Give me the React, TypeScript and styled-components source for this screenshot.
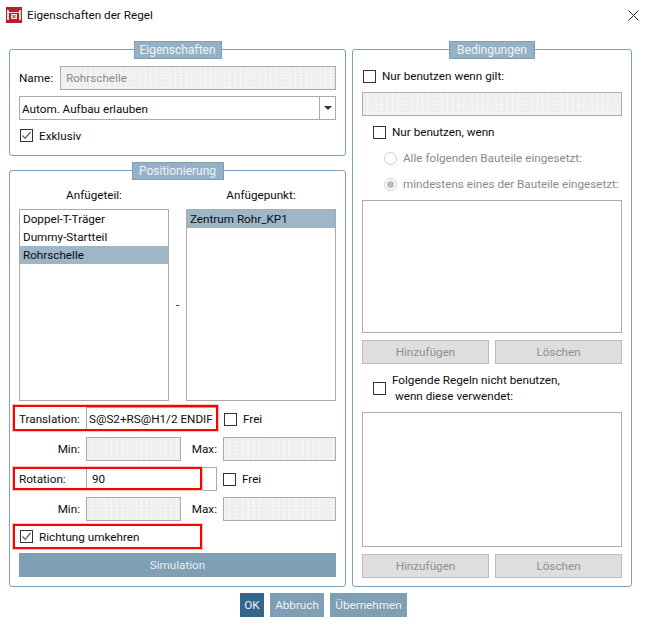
import React from "react";
import styled, { createGlobalStyle } from "styled-components";

const Global = createGlobalStyle`
  html, body { margin: 0; padding: 0; background: #fff; }
  #root { width: 647px; height: 626px; overflow: hidden; }
  * { box-sizing: border-box; }
`;

const Dialog = styled.div`
  width: 647px;
  height: 626px;
  background: #fff;
  font-family: Roboto, "Noto Sans", sans-serif;
  font-size: 11.7px;
  color: #0c0c0c;
  display: flex;
  flex-direction: column;
`;

const TitleBar = styled.div`
  height: 30px;
  display: flex;
  align-items: center;
  padding: 0 8px 0 6px;
  gap: 5px;
  flex: none;
`;

const Title = styled.span`
  flex: 1;
`;

const Columns = styled.div`
  display: flex;
  gap: 6px;
  padding: 19px 0 0 9px;
  height: 557px;
  flex: none;
`;

const LeftColumn = styled.div`
  width: 337px;
  display: flex;
  flex-direction: column;
  gap: 14px;
`;

const Panel = styled.section<{ $h: number; $w?: number }>`
  height: ${(p) => p.$h}px;
  width: ${(p) => (p.$w ? `${p.$w}px` : "auto")};
  border: 1px solid #7f9fb4;
  border-radius: 3px;
  padding: 0 9px;
  display: flex;
  flex-direction: column;
`;

const Legend = styled.div<{ $w: number }>`
  width: ${(p) => p.$w}px;
  height: 18px;
  margin: -9px auto 0;
  background: #94b1c7;
  border: 1px solid #7f9fb4;
  color: #f0f4f7;
  font-size: 12px;
  display: flex;
  align-items: center;
  justify-content: center;
  flex: none;
`;

const Row = styled.div<{ $top?: number }>`
  position: relative;
  display: flex;
  align-items: center;
  height: 24px;
  margin-top: ${(p) => p.$top ?? 0}px;
  flex: none;
`;

const FieldLabel = styled.span<{ $w: number; $right?: boolean }>`
  width: ${(p) => p.$w}px;
  flex: none;
  text-align: ${(p) => (p.$right ? "right" : "left")};
  padding-right: ${(p) => (p.$right ? 6 : 0)}px;
`;

const Disabled = styled.div<{ $w?: number }>`
  width: ${(p) => (p.$w ? `${p.$w}px` : "100%")};
  height: 24px;
  flex: ${(p) => (p.$w ? "none" : "1")};
  border: 1px solid #ababab;
  color: #8a8a8a;
  padding-left: 5px;
  display: flex;
  align-items: center;
  background-color: #eff3ef;
  background-image:
    radial-gradient(circle, #f3d9de 0.6px, transparent 0.8px),
    radial-gradient(circle, #fff 0.6px, transparent 0.8px);
  background-size: 6px 4px, 5px 3px;
  background-position: 0 0, 2px 1px;
`;

const Input = styled.div<{ $w: number; $pad: number }>`
  width: ${(p) => p.$w}px;
  height: 24px;
  flex: none;
  border: 1px solid #ababab;
  padding-left: ${(p) => p.$pad}px;
  display: flex;
  align-items: center;
  overflow: hidden;
  white-space: nowrap;
  background: #fff;
`;

const Select = styled.div`
  height: 24px;
  width: 100%;
  border: 1px solid #ababab;
  display: flex;
  align-items: center;
  padding: 1px 0 0 2px;
  justify-content: space-between;
`;

const SelectArrow = styled.span`
  width: 16px;
  height: 22px;
  margin-top: -1px;
  border-left: 1px solid #ababab;
  display: flex;
  align-items: center;
  justify-content: center;
  &::after {
    content: "";
    border-left: 4px solid transparent;
    border-right: 4px solid transparent;
    border-top: 4px solid #333;
  }
`;

const CheckRow = styled.div<{ $top?: number; $indent?: number; $h?: number; $low?: boolean }>`
  position: relative;
  display: flex;
  align-items: center;
  gap: 6px;
  height: ${(p) => p.$h ?? 16}px;
  margin-top: ${(p) => p.$top ?? 0}px;
  padding-left: ${(p) => p.$indent ?? 1}px;
  padding-top: ${(p) => (p.$low ? 1 : 0)}px;
  flex: none;
  white-space: nowrap;
`;

const Box = styled.span<{ $low?: boolean }>`
  width: 13px;
  height: 13px;
  margin-top: ${(p) => (p.$low ? -1 : 0)}px;
  border: 1px solid #333;
  background: #fff;
  flex: none;
  display: inline-flex;
`;

const Radio = styled.span<{ $on?: boolean }>`
  width: 13px;
  height: 13px;
  border-radius: 50%;
  border: 1px solid #cfcfcf;
  flex: none;
  display: inline-flex;
  align-items: center;
  justify-content: center;
  &::after {
    content: "";
    width: 7px;
    height: 7px;
    border-radius: 50%;
    background: ${(p) => (p.$on ? "#bdbdbd" : "transparent")};
  }
`;

const Muted = styled.span`
  color: #8a8a8a;
`;

const ListHeads = styled.div`
  display: grid;
  grid-template-columns: 150px 150px;
  column-gap: 17px;
  text-align: center;
  margin-top: 7px;
  height: 16px;
  line-height: 16px;
  flex: none;
`;

const Lists = styled.div`
  display: flex;
  align-items: center;
  justify-content: space-between;
  height: 192px;
  margin-top: 6px;
  flex: none;
`;

const ListBox = styled.div<{ $h?: number; $w?: number; $top?: number }>`
  width: ${(p) => (p.$w ? `${p.$w}px` : "100%")};
  height: ${(p) => (p.$h ? `${p.$h}px` : "100%")};
  margin-top: ${(p) => p.$top ?? 0}px;
  border: 1px solid #ababab;
  background: #fff;
  flex: none;
`;

const ListItem = styled.div<{ $sel?: boolean }>`
  height: 18px;
  line-height: 19px;
  padding-left: 3px;
  background: ${(p) => (p.$sel ? "#9db6c8" : "transparent")};
`;

const Callout = styled.div<{ $l: number; $t: number; $w: number; $h: number }>`
  position: absolute;
  left: ${(p) => p.$l}px;
  top: ${(p) => p.$t}px;
  width: ${(p) => p.$w}px;
  height: ${(p) => p.$h}px;
  border: 2px solid #f00;
  box-shadow: 0 0 0 1px #ffc4c4;
  pointer-events: none;
`;

const Frei = styled.span`
  margin-left: 6px;
  display: inline-flex;
  align-items: center;
  gap: 6px;
`;

const Wide = styled.div`
  height: 24px;
  margin-top: 5px;
  background: #7e9fb4;
  color: #e8eef2;
  display: flex;
  align-items: center;
  justify-content: center;
  flex: none;
`;

const ButtonPair = styled.div<{ $top: number }>`
  display: grid;
  grid-template-columns: 127px 127px;
  column-gap: 6px;
  margin-top: ${(p) => p.$top}px;
  flex: none;
`;

const GrayButton = styled.div`
  height: 24px;
  background: #dedede;
  border: 1px solid #bcbcbc;
  color: #8f8f8f;
  display: flex;
  align-items: center;
  justify-content: center;
`;

const Footer = styled.div`
  display: flex;
  justify-content: center;
  gap: 6px;
  padding: 6px 0 0 0;
`;

const FootButton = styled.div<{ $w: number; $primary?: boolean }>`
  width: ${(p) => p.$w}px;
  height: 24px;
  background: ${(p) => (p.$primary ? "#34668a" : "#7e9fb4")};
  color: #edf2f5;
  display: flex;
  align-items: center;
  justify-content: center;
`;

const TwoLine = styled.span`
  line-height: 16px;
  white-space: pre;
`;

const Check = () => (
  <svg width="11" height="11" viewBox="0 0 11 11">
    <path d="M1.5 5.5 L4.2 8.3 L9.5 2" fill="none" stroke="#5a5a5a" strokeWidth="1.2" />
  </svg>
);

const AppIcon = () => (
  <svg width="16" height="16" viewBox="0 0 16 16">
    <rect width="16" height="16" fill="#c01c28" />
    <rect x="1" y="3" width="2" height="10" fill="#f6dcdc" />
    <rect x="13" y="3" width="2" height="10" fill="#f6dcdc" />
    <rect x="3" y="5" width="10" height="1" fill="#f6dcdc" />
    <rect x="5" y="7" width="6" height="5" fill="#f7e6e6" />
    <path d="M6.5 8 L9.5 11 M9.5 8 L6.5 11" stroke="#b01a26" strokeWidth="1" />
  </svg>
);

const CloseIcon = () => (
  <svg width="11" height="11" viewBox="0 0 11 11">
    <path d="M0.5 0.5 L10.5 10.5 M10.5 0.5 L0.5 10.5" stroke="#222" strokeWidth="1" />
  </svg>
);

export default function App() {
  return (
    <Dialog>
      <Global />
      <TitleBar>
        <AppIcon />
        <Title>Eigenschaften der Regel</Title>
        <CloseIcon />
      </TitleBar>
      <Columns>
        <LeftColumn>
          <Panel $h={107}>
            <Legend $w={88}>Eigenschaften</Legend>
            <Row $top={7}>
              <FieldLabel $w={41}>Name:</FieldLabel>
              <Disabled>Rohrschelle</Disabled>
            </Row>
            <Row $top={6}>
              <Select>
                Autom. Aufbau erlauben
                <SelectArrow />
              </Select>
            </Row>
            <CheckRow $top={7} $h={16} $low>
              <Box $low><Check /></Box>
              Exklusiv
            </CheckRow>
          </Panel>
          <Panel $h={417}>
            <Legend $w={92}>Positionierung</Legend>
            <ListHeads>
              <span>Anfügeteil:</span>
              <span>Anfügepunkt:</span>
            </ListHeads>
            <Lists>
              <ListBox $w={150}>
                <ListItem>Doppel-T-Träger</ListItem>
                <ListItem>Dummy-Startteil</ListItem>
                <ListItem $sel>Rohrschelle</ListItem>
              </ListBox>
              <span>-</span>
              <ListBox $w={150}>
                <ListItem $sel>Zentrum Rohr_KP1</ListItem>
              </ListBox>
            </Lists>
            <Row $top={6}>
              <FieldLabel $w={67}>Translation:</FieldLabel>
              <Input $w={132} $pad={2}>S@S2+RS@H1/2 ENDIF</Input>
              <Frei><Box />Frei</Frei>
              <Callout $l={-6} $t={-2} $w={205} $h={26} />
            </Row>
            <Row $top={6}>
              <FieldLabel $w={67} $right>Min:</FieldLabel>
              <Disabled $w={95} />
              <FieldLabel $w={42} $right>Max:</FieldLabel>
              <Disabled $w={113} />
            </Row>
            <Row $top={6}>
              <FieldLabel $w={67}>Rotation:</FieldLabel>
              <Input $w={131} $pad={5}>90</Input>
              <Frei><Box />Frei</Frei>
              <Callout $l={-6} $t={0} $w={189} $h={23} />
            </Row>
            <Row $top={6}>
              <FieldLabel $w={67} $right>Min:</FieldLabel>
              <Disabled $w={95} />
              <FieldLabel $w={42} $right>Max:</FieldLabel>
              <Disabled $w={113} />
            </Row>
            <CheckRow $top={3} $h={24} $low>
              <Box $low><Check /></Box>
              Richtung umkehren
              <Callout $l={-6} $t={0} $w={189} $h={25} />
            </CheckRow>
            <Wide>Simulation</Wide>
          </Panel>
        </LeftColumn>
        <Panel $h={538} $w={280}>
          <Legend $w={86}>Bedingungen</Legend>
          <CheckRow $top={9} $h={16}>
            <Box />
            Nur benutzen wenn gilt:
          </CheckRow>
          <Row $top={8}>
            <Disabled />
          </Row>
          <CheckRow $top={8} $indent={11}>
            <Box />
            Nur benutzen, wenn
          </CheckRow>
          <CheckRow $top={10} $indent={22}>
            <Radio />
            <Muted>Alle folgenden Bauteile eingesetzt:</Muted>
          </CheckRow>
          <CheckRow $top={10} $indent={22}>
            <Radio $on />
            <Muted>mindestens eines der Bauteile eingesetzt:</Muted>
          </CheckRow>
          <ListBox $h={133} $top={8} />
          <ButtonPair $top={7}>
            <GrayButton>Hinzufügen</GrayButton>
            <GrayButton>Löschen</GrayButton>
          </ButtonPair>
          <CheckRow $top={8} $indent={11} $h={32}>
            <Box />
            <TwoLine>{"Folgende Regeln nicht benutzen,\n wenn diese verwendet:"}</TwoLine>
          </CheckRow>
          <ListBox $h={135} $top={8} />
          <ButtonPair $top={7}>
            <GrayButton>Hinzufügen</GrayButton>
            <GrayButton>Löschen</GrayButton>
          </ButtonPair>
        </Panel>
      </Columns>
      <Footer>
        <FootButton $w={24} $primary>OK</FootButton>
        <FootButton $w={54}>Abbruch</FootButton>
        <FootButton $w={77}>Übernehmen</FootButton>
      </Footer>
    </Dialog>
  );
}
